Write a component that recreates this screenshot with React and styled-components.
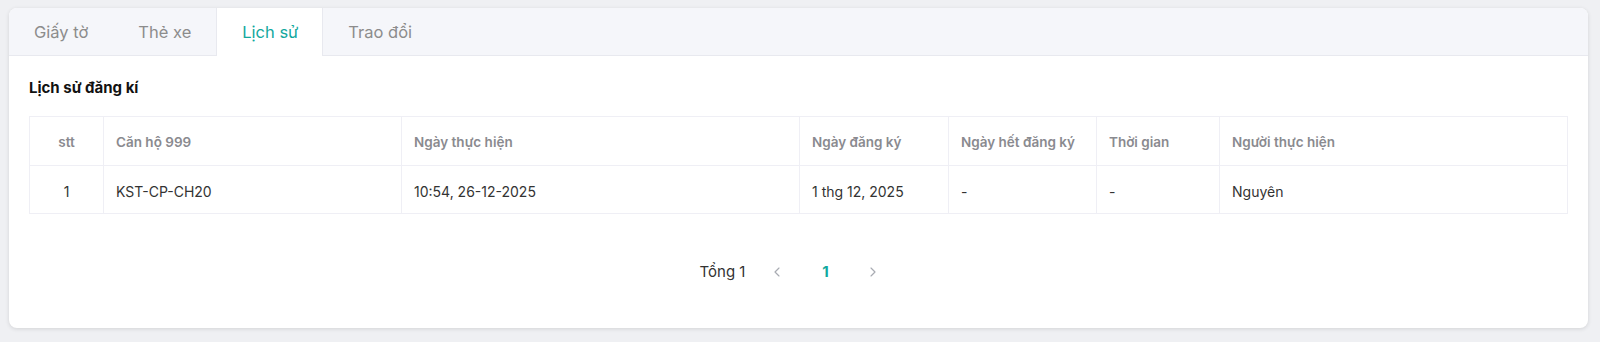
import React from "react";
import styled, { createGlobalStyle } from "styled-components";
import { ChevronLeft, ChevronRight } from "lucide-react";

const GlobalStyle = createGlobalStyle`
  body {
    margin: 0;
    background: #eff0f3;
    font-family: "Inter", "Noto Sans", sans-serif;
  }
`;

const Page = styled.div`
  padding: 8px 12px 14px 9px;
`;

const Card = styled.div`
  height: 320px;
  background: #fff;
  border-radius: 8px;
  box-shadow: 0 1px 4px rgba(0, 0, 0, 0.12);
  overflow: hidden;
  display: flex;
  flex-direction: column;
`;

const TabBar = styled.div`
  display: flex;
  height: 47px;
  background: #f5f6fa;
  border-bottom: 1px solid #e8e9ef;
`;

const Tab = styled.div`
  display: flex;
  align-items: center;
  padding: 0 24px 0 ${(p) => (p.active ? "25px" : "24px")};
  font-size: 16.5px;
  color: ${(p) => (p.active ? "#13a89e" : "#8c8c8c")};
  background: ${(p) => (p.active ? "#fff" : "transparent")};
  border-left: 1px solid ${(p) => (p.active ? "#e8e9ef" : "transparent")};
  border-right: 1px solid ${(p) => (p.active ? "#e8e9ef" : "transparent")};
  margin-bottom: ${(p) => (p.active ? "-1px" : "0")};
  cursor: pointer;
`;

const Content = styled.div`
  padding: 23px 20px 0 20px;
`;

const Heading = styled.h3`
  margin: 0 0 19px;
  font-size: 15px;
  font-weight: 700;
  color: #111;
  line-height: 18px;
`;

const Table = styled.table`
  width: 100%;
  border-collapse: collapse;
  table-layout: fixed;
  border: 1px solid #efeff5;
`;

const Th = styled.th`
  height: 46px;
  padding: 2px 12px 0;
  text-align: ${(p) => (p.center ? "center" : "left")};
  font-size: 13.5px;
  font-weight: 600;
  color: #8a8a8f;
  border: 1px solid #efeff5;
`;

const Td = styled.td`
  height: 44px;
  padding: 3px 12px 0;
  text-align: ${(p) => (p.center ? "center" : "left")};
  font-size: 14px;
  color: #333;
  border: 1px solid #efeff5;
`;

const Pager = styled.div`
  display: flex;
  justify-content: center;
  align-items: center;
  margin-top: 48px;
  font-size: 15px;
  color: #333;
`;

const Total = styled.span`
  margin-right: 8px;
`;

const PageBtn = styled.span`
  display: flex;
  align-items: center;
  justify-content: center;
  width: 32px;
  margin: 0 8px;
  color: ${(p) => (p.active ? "#13a89e" : "#a8abb2")};
  font-weight: ${(p) => (p.active ? 700 : 400)};
`;

const columns = [
  { label: "stt", width: 74, center: true },
  { label: "Căn hộ 999", width: 298 },
  { label: "Ngày thực hiện", width: 398 },
  { label: "Ngày đăng ký", width: 149 },
  { label: "Ngày hết đăng ký", width: 148 },
  { label: "Thời gian", width: 123 },
  { label: "Người thực hiện" },
];

const rows = [
  ["1", "KST-CP-CH20", "10:54, 26-12-2025", "1 thg 12, 2025", "-", "-", "Nguyên"],
];

const tabs = ["Giấy tờ", "Thẻ xe", "Lịch sử", "Trao đổi"];

export default function App() {
  return (
    <>
      <GlobalStyle />
      <Page>
        <Card>
          <TabBar>
            {tabs.map((t) => (
              <Tab key={t} active={t === "Lịch sử"}>
                {t}
              </Tab>
            ))}
          </TabBar>
          <Content>
            <Heading>Lịch sử đăng kí</Heading>
            <Table>
              <colgroup>
                {columns.map((c, i) => (
                  <col key={i} style={c.width ? { width: c.width } : undefined} />
                ))}
              </colgroup>
              <thead>
                <tr>
                  {columns.map((c) => (
                    <Th key={c.label} center={c.center}>
                      {c.label}
                    </Th>
                  ))}
                </tr>
              </thead>
              <tbody>
                {rows.map((r, i) => (
                  <tr key={i}>
                    {r.map((v, j) => (
                      <Td key={j} center={columns[j].center}>
                        {v}
                      </Td>
                    ))}
                  </tr>
                ))}
              </tbody>
            </Table>
            <Pager>
              <Total>Tổng 1</Total>
              <PageBtn>
                <ChevronLeft size={16} strokeWidth={1.75} />
              </PageBtn>
              <PageBtn active>1</PageBtn>
              <PageBtn>
                <ChevronRight size={16} strokeWidth={1.75} />
              </PageBtn>
            </Pager>
          </Content>
        </Card>
      </Page>
    </>
  );
}
